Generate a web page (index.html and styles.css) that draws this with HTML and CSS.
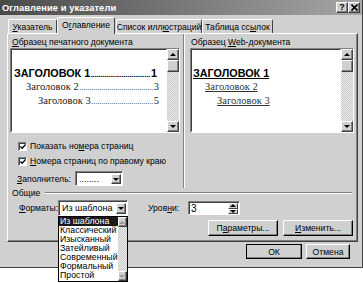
FILE: index.html
```html
<!DOCTYPE html>
<html lang="ru">
<head>
    <meta charset="UTF-8">
    <title>Оглавление и указатели</title>
    <link rel="stylesheet" href="styles.css">
</head>
<body>
    <div class="dialog">
        <div class="titlebar">
            <span class="title">Оглавление и указатели</span>
            <span class="caption-btns">
                <span class="cbtn">?</span>
                <span class="cbtn">
                    <svg width="7" height="7" viewBox="0 0 7 7"><path d="M0.5 0.5 L6.5 6.5 M6.5 0.5 L0.5 6.5" stroke="#000" stroke-width="1.6"/></svg>
                </span>
            </span>
        </div>

        <div class="tabs">
            <div class="tab"><span><u>У</u>казатель</span></div>
            <div class="tab active"><span>О<u>г</u>лавление</span></div>
            <div class="tab"><span>Список илл<u>ю</u>страций</span></div>
            <div class="tab"><span>Таблица сс<u>ы</u>лок</span></div>
        </div>

        <div class="panel">
            <div class="top">
                <div class="col left">
                    <div class="label"><u>О</u>бразец печатного документа</div>
                    <div class="preview">
                        <div class="pv-body">
                            <div class="toc-line h1"><span>ЗАГОЛОВОК 1</span><span class="dots"></span><span>1</span></div>
                            <div class="toc-line h2"><span>Заголовок 2</span><span class="dots"></span><span>3</span></div>
                            <div class="toc-line h3"><span>Заголовок 3</span><span class="dots"></span><span>5</span></div>
                        </div>
                        <div class="vscroll">
                            <div class="sb-btn up"></div>
                            <div class="sb-thumb"></div>
                            <div class="sb-track"></div>
                            <div class="sb-btn down"></div>
                        </div>
                    </div>
                    <div class="check first">
                        <span class="box"><svg width="7" height="7" viewBox="0 0 7 7"><path d="M0.5 3.5 L2.5 5.5 L6.5 1" fill="none" stroke="#000" stroke-width="1.6"/></svg></span>
                        <span>Показать но<u>м</u>ера страниц</span>
                    </div>
                    <div class="check">
                        <span class="box"><svg width="7" height="7" viewBox="0 0 7 7"><path d="M0.5 3.5 L2.5 5.5 L6.5 1" fill="none" stroke="#000" stroke-width="1.6"/></svg></span>
                        <span><u>Н</u>омера страниц по правому краю</span>
                    </div>
                    <div class="filler-row">
                        <span class="filler-label"><u>З</u>аполнитель:</span>
                        <div class="combo filler">
                            <span class="combo-text">........</span>
                            <span class="combo-btn"></span>
                        </div>
                    </div>
                </div>
                <div class="col right">
                    <div class="label">Образец <u>W</u>eb-документа</div>
                    <div class="preview">
                        <div class="pv-body web">
                            <div class="web-line h1"><span>ЗАГОЛОВОК 1</span></div>
                            <div class="web-line h2"><span>Заголовок 2</span></div>
                            <div class="web-line h3"><span>Заголовок 3</span></div>
                        </div>
                        <div class="vscroll">
                            <div class="sb-btn up"></div>
                            <div class="sb-thumb"></div>
                            <div class="sb-track"></div>
                            <div class="sb-btn down"></div>
                        </div>
                    </div>
                </div>
            </div>

            <div class="group-title"><span>Общие</span><span class="etched"></span></div>

            <div class="formats-row">
                <span class="formats-label"><u>Ф</u>орматы:</span>
                <div class="combo formats">
                    <span class="combo-text">Из шаблона</span>
                    <span class="combo-btn"></span>
                </div>
                <span class="levels-label">Уров<u>н</u>и:</span>
                <div class="spin">
                    <span class="spin-text">3</span>
                    <span class="spin-btns"><span class="spin-up"></span><span class="spin-down"></span></span>
                </div>
            </div>

            <div class="btn-row">
                <button class="btn params">П<u>а</u>раметры...</button>
                <button class="btn change"><u>И</u>зменить...</button>
            </div>

            <div class="droplist">
                <ul class="items">
                    <li class="selected">Из шаблона</li>
                    <li>Классический</li>
                    <li>Изысканный</li>
                    <li>Затейливый</li>
                    <li>Современный</li>
                    <li>Формальный</li>
                    <li>Простой</li>
                </ul>
                <div class="vscroll list-scroll">
                    <div class="sb-btn up disabled"></div>
                    <div class="sb-track"></div>
                    <div class="sb-btn down disabled"></div>
                </div>
            </div>
        </div>

        <div class="footer">
            <button class="btn ok">ОК</button>
            <button class="btn cancel">Отмена</button>
        </div>
    </div>
</body>
</html>
```

FILE: styles.css
```css
:root {
    --face: #d0d0d0;
    --shadow: #808080;
    --dark: #404040;
    --light: #ffffff;
    --title-dark: #4a4a4a;
    --title-light: #a6a6a6;
}

* {
    margin: 0;
    padding: 0;
    box-sizing: border-box;
}

html, body {
    height: 283px;
}

body {
    background: #ffffff;
    font-family: 'Liberation Sans', Arial, sans-serif;
    font-size: 8.6px;
    color: #000;
}

.dialog {
    width: 363px;
    height: 268px;
    background: var(--face);
    border-bottom: 1px solid var(--dark);
    border-right: 1px solid var(--dark);
    position: relative;
}

/* title bar */
.titlebar {
    height: 15px;
    background: linear-gradient(90deg, var(--title-dark), var(--title-light));
    display: flex;
    align-items: center;
    justify-content: space-between;
    padding: 0 2px 0 2px;
}

.title {
    color: #fff;
    font-weight: bold;
    font-size: 9.3px;
    letter-spacing: 0.1px;
}

.caption-btns {
    display: flex;
}

.cbtn {
    width: 12px;
    height: 11px;
    background: var(--face);
    border: 1px solid;
    border-color: var(--light) var(--dark) var(--dark) var(--light);
    box-shadow: inset -1px -1px var(--shadow);
    display: flex;
    align-items: center;
    justify-content: center;
    font-weight: bold;
    font-size: 9px;
    line-height: 1;
}

/* tabs */
.tabs {
    height: 18px;
    display: flex;
    align-items: flex-end;
    padding-left: 8px;
}

.tab {
    flex-shrink: 0;
    white-space: nowrap;
    height: 14px;
    border: 1px solid;
    border-bottom: none;
    border-color: var(--light) var(--dark) transparent var(--light);
    border-radius: 2px 2px 0 0;
    display: flex;
    align-items: center;
    justify-content: center;
}

.tab:nth-child(1) { width: 49px; }
.tab:nth-child(3) { width: 86px; }
.tab:nth-child(4) { width: 71px; }

.tab.active {
    width: 58px;
    height: 17px;
    margin: 0 1px -1px 0;
    padding-bottom: 2px;
    background: var(--face);
    position: relative;
    z-index: 1;
}

/* tab panel */
.panel {
    margin-left: 7px;
    width: 351px;
    height: 209px;
    border: 1px solid;
    border-color: var(--light) var(--dark) var(--dark) var(--light);
    box-shadow: inset -1px -1px var(--shadow);
    position: relative;
}

.top {
    display: flex;
    height: 154px;
}

.col {
    padding-top: 3px;
}

.col.left {
    width: 176px;
    padding-left: 2px;
    border-right: 1px solid var(--shadow);
    box-shadow: 1px 0 var(--light);
}

.col.right {
    padding-left: 5px;
    margin-left: 1px;
}

.label {
    height: 11px;
    line-height: 10px;
    padding-left: 2px;
    white-space: nowrap;
}

.col.right .label {
    padding-left: 1px;
}

.preview {
    display: flex;
    height: 85px;
    border: 1px solid;
    border-color: var(--shadow) var(--light) var(--light) var(--shadow);
}

.col.left .preview { width: 170px; }
.col.right .preview { width: 164px; }

.pv-body {
    flex: 1;
    background: #fff;
    border: 1px solid;
    border-color: var(--dark) transparent transparent var(--dark);
    padding: 17px 9px 0 2px;
    overflow: hidden;
}

.toc-line {
    display: flex;
    align-items: baseline;
    white-space: nowrap;
}

.toc-line .dots {
    flex: 1;
    overflow: hidden;
    margin: 0 0.5px;
}

.toc-line .dots::before {
    content: "................................................................................";
}

.toc-line.h1 {
    font-family: 'Liberation Sans', Arial, sans-serif;
    font-weight: bold;
    font-size: 10.8px;
    height: 14px;
}

.toc-line.h1 .dots {
    font-weight: bold;
    font-size: 8px;
    letter-spacing: -0.3px;
}

.toc-line.h2,
.toc-line.h3 {
    font-family: 'Liberation Serif', 'Times New Roman', serif;
    font-size: 10.5px;
    height: 14px;
    color: #222;
}

.toc-line.h2 .dots,
.toc-line.h3 .dots {
    font-size: 8px;
}

.toc-line.h2 { padding-left: 12px; margin-right: -2px; }
.toc-line.h3 { padding-left: 24px; margin-right: -2px; }

.pv-body.web {
    padding: 17px 2px 0 1px;
}

.web-line {
    white-space: nowrap;
    height: 14px;
}

.web-line span {
    text-decoration: underline;
}

.web-line.h1 {
    font-weight: bold;
    font-size: 10.8px;
}

.web-line.h2,
.web-line.h3 {
    font-family: 'Liberation Serif', 'Times New Roman', serif;
    font-size: 10.5px;
    color: #333;
}

.web-line.h2 { padding-left: 12px; }
.web-line.h3 { padding-left: 24px; }

/* scrollbars */
.vscroll {
    width: 12px;
    display: flex;
    flex-direction: column;
    background: repeating-conic-gradient(#ececec 0 25%, #c8c8c8 0 50%) 0 0 / 2px 2px;
}

.sb-btn {
    height: 11px;
    background: var(--face);
    border: 1px solid;
    border-color: var(--light) var(--dark) var(--dark) var(--light);
    box-shadow: inset -1px -1px var(--shadow);
    display: flex;
    align-items: center;
    justify-content: center;
}

.sb-btn.up::before,
.sb-btn.down::before {
    content: "";
    border-left: 3px solid transparent;
    border-right: 3px solid transparent;
}

.sb-btn.up::before { border-bottom: 3px solid #000; }
.sb-btn.down::before { border-top: 3px solid #000; }

.sb-btn.disabled.up::before { border-bottom-color: #9a9a9a; }
.sb-btn.disabled.down::before { border-top-color: #9a9a9a; }

.sb-thumb {
    height: 12px;
    background: var(--face);
    border: 1px solid;
    border-color: var(--light) var(--dark) var(--dark) var(--light);
    box-shadow: inset -1px -1px var(--shadow);
}

.sb-track {
    flex: 1;
}

/* checkboxes */
.check {
    display: flex;
    align-items: center;
    gap: 3px;
    height: 10px;
    padding-left: 8px;
    margin-top: 5px;
    white-space: nowrap;
}

.check.first {
    margin-top: 8px;
}

.box {
    flex-shrink: 0;
    width: 9px;
    height: 9px;
    background: #fff;
    border: 1px solid;
    border-color: var(--shadow) var(--light) var(--light) var(--shadow);
    box-shadow: inset 1px 1px var(--dark);
    display: flex;
    align-items: center;
    justify-content: center;
    padding: 1px 0 0 1px;
}

.filler-row {
    display: flex;
    align-items: center;
    margin-top: 5px;
    padding-left: 7px;
    height: 15px;
}

.filler-label {
    flex-shrink: 0;
    width: 58px;
    white-space: nowrap;
}

/* combos */
.combo {
    flex-shrink: 0;
    display: flex;
    background: #fff;
    border: 1px solid;
    border-color: var(--shadow) var(--light) var(--light) var(--shadow);
    box-shadow: inset 1px 1px var(--dark);
    padding: 2px 1px 1px 2px;
}

.combo.filler {
    width: 48px;
    height: 15px;
}

.combo.formats {
    width: 70px;
    height: 16px;
}

.combo-text {
    flex: 1;
    line-height: 11px;
    padding-left: 1px;
    white-space: nowrap;
    font-size: 9px;
}

.combo-btn {
    width: 10px;
    background: var(--face);
    border: 1px solid;
    border-color: var(--light) var(--dark) var(--dark) var(--light);
    box-shadow: inset -1px -1px var(--shadow);
    display: flex;
    align-items: center;
    justify-content: center;
}

.combo-btn::before {
    content: "";
    border-left: 3px solid transparent;
    border-right: 3px solid transparent;
    border-top: 3px solid #000;
}

/* general group */
.group-title {
    display: flex;
    align-items: center;
    height: 10px;
    padding-left: 4px;
}

.etched {
    flex: 1;
    height: 2px;
    margin: 0 5px 0 5px;
    border-top: 1px solid var(--shadow);
    border-bottom: 1px solid var(--light);
}

.formats-row {
    display: flex;
    align-items: center;
    height: 16px;
    margin-top: 2px;
    padding-left: 11px;
    white-space: nowrap;
}

.formats-label {
    flex-shrink: 0;
    width: 39px;
}

.levels-label {
    flex-shrink: 0;
    margin-left: 20px;
    width: 40px;
}

.spin {
    flex-shrink: 0;
    display: flex;
    width: 52px;
    height: 14px;
    background: #fff;
    border: 1px solid;
    border-color: var(--shadow) var(--light) var(--light) var(--shadow);
    box-shadow: inset 1px 1px var(--dark);
    padding: 1px 1px 0 2px;
}

.spin-text {
    flex: 1;
    line-height: 11px;
    font-size: 10px;
}

.spin-btns {
    width: 10px;
    display: flex;
    flex-direction: column;
}

.spin-up,
.spin-down {
    flex: 1;
    background: var(--face);
    border: 1px solid;
    border-color: var(--light) var(--dark) var(--dark) var(--light);
    display: flex;
    align-items: center;
    justify-content: center;
}

.spin-up::before,
.spin-down::before {
    content: "";
    border-left: 3px solid transparent;
    border-right: 3px solid transparent;
}

.spin-up::before { border-bottom: 3px solid #000; }
.spin-down::before { border-top: 3px solid #000; }

/* buttons */
.btn-row {
    display: flex;
    justify-content: flex-end;
    gap: 5px;
    margin-top: 4px;
    padding-right: 4px;
}

.btn {
    font-family: 'Liberation Sans', Arial, sans-serif;
    font-size: 8.6px;
    background: var(--face);
    border: 1px solid;
    border-color: var(--light) #000 #000 var(--light);
    box-shadow: inset -1px -1px var(--shadow);
    height: 16px;
    color: #000;
}

.btn.params { width: 70px; }
.btn.change { width: 70px; }

.footer {
    display: flex;
    justify-content: flex-end;
    gap: 4px;
    padding: 2px 12px 0 0;
}

.btn.ok {
    width: 56px;
    height: 15px;
    outline: 1px solid #000;
    outline-offset: -1px;
}

.btn.cancel {
    width: 44px;
    height: 15px;
}

/* open dropdown list */
.droplist {
    position: absolute;
    left: 50px;
    top: 182px;
    width: 70px;
    height: 66px;
    background: #fff;
    border: 1px solid #000;
    display: flex;
    z-index: 5;
}

.items {
    list-style: none;
    flex: 1;
    font-size: 8.8px;
}

.items li {
    display: block;
    height: 9px;
    line-height: 9px;
    padding-left: 1px;
    white-space: nowrap;
    overflow: hidden;
}

.items li.selected {
    background: #1a1a1a;
    color: #fff;
}

.list-scroll {
    width: 10px;
}

.list-scroll .sb-btn {
    height: 10px;
}
```
